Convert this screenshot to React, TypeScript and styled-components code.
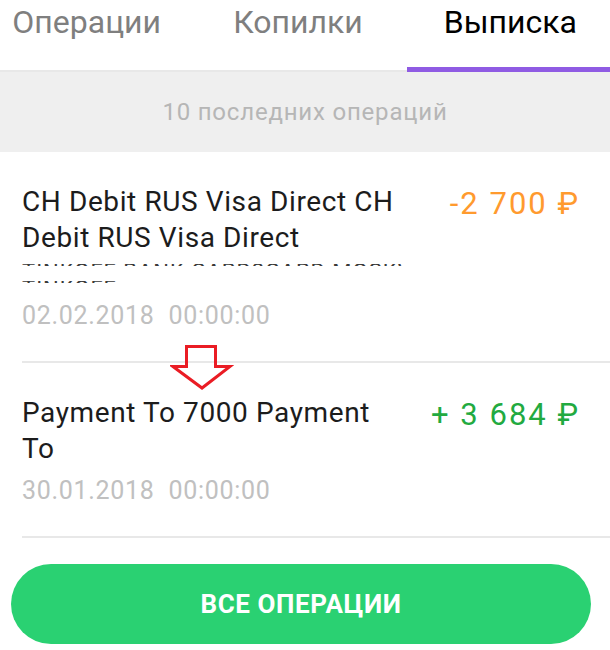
import React, { FC } from 'react';
import styled, { createGlobalStyle } from 'styled-components';

const GlobalStyle = createGlobalStyle`
  html, body {
    margin: 0;
    padding: 0;
    background: #ffffff;
  }

  body {
    font-family: Roboto, 'Liberation Sans', sans-serif;
    -webkit-font-smoothing: antialiased;
  }
`;

const Page = styled.div`
  width: 610px;
  height: 650px;
  overflow: hidden;
  display: flex;
  flex-direction: column;
`;

const Tabs = styled.div`
  display: grid;
  grid-template-columns: repeat(3, 1fr);
`;

const Tab = styled.div<{ $active?: boolean; $shift: number }>`
  box-sizing: border-box;
  height: 72px;
  padding-top: 2px;
  display: flex;
  justify-content: center;
  border-bottom: ${(p) => (p.$active ? '5px solid #8f5be3' : '2px solid #e8e8e8')};
  font-size: 32px;
  line-height: 40px;
  color: ${(p) => (p.$active ? '#000000' : '#7f7f7f')};

  span {
    transform: translateX(${(p) => p.$shift}px);
  }
`;

const Caption = styled.div`
  height: 80px;
  display: flex;
  align-items: center;
  justify-content: center;
  background: #efefef;
  color: #b6b6b6;
  font-size: 24px;
  letter-spacing: 0.8px;
`;

const Item = styled.div`
  position: relative;
  display: flex;
  justify-content: space-between;
  align-items: flex-start;
  margin-left: 22px;
  padding: 32px 30px 30px 0;
  border-bottom: 2px solid #e8e8e8;
`;

const Info = styled.div`
  width: 382px;
`;

const Title = styled.div`
  font-size: 28px;
  line-height: 36px;
  letter-spacing: 0.6px;
  color: #1c1c1c;
`;

const HiddenLine = styled.div`
  height: 36px;
  padding-top: 8px;
  box-sizing: border-box;
`;

const Slice = styled.div<{ $gap: number }>`
  height: 2px;
  margin-top: ${(p) => p.$gap}px;
  overflow: hidden;
  white-space: nowrap;
  font-size: 22px;
  line-height: 22px;
  color: #3a3a3a;

  span {
    display: block;
    margin-top: -3px;
    letter-spacing: 1px;
  }
`;

const Date = styled.div`
  margin-top: 9px;
  font-size: 25px;
  line-height: 30px;
  letter-spacing: 0.7px;
  color: #c0c0c0;
  white-space: pre;
`;

const Amount = styled.div<{ $income?: boolean }>`
  margin-top: 2px;
  font-size: 31px;
  line-height: 36px;
  letter-spacing: 2px;
  white-space: nowrap;
  color: ${(p) => (p.$income ? '#22aa40' : '#ff9a2e')};
`;

const Marker = styled.svg`
  position: absolute;
  left: 148px;
  top: -19px;
`;

const Footer = styled.div`
  padding: 26px 19px 0 11px;
`;

const Button = styled.button`
  width: 100%;
  height: 80px;
  border: none;
  border-radius: 40px;
  background: #2ad172;
  color: #ffffff;
  font-family: Roboto, 'Liberation Sans', sans-serif;
  font-size: 26px;
  font-weight: 700;
  letter-spacing: 0.6px;
`;

const DownArrow: FC = () => (
  <Marker width="64" height="46" viewBox="0 0 64 46">
    <path
      d="M16.5 2.5 H45.5 V22.5 H60 L32 44 L3 22.5 H16.5 Z"
      fill="none"
      stroke="#ea1c24"
      strokeWidth="3"
    />
  </Marker>
);

const tabs = [
  { label: 'Операции', shift: -15 },
  { label: 'Копилки', shift: -7 },
  { label: 'Выписка', shift: 2, active: true },
];

const App: FC = () => (
  <>
    <GlobalStyle />
    <Page>
      <Tabs>
        {tabs.map((t) => (
          <Tab key={t.label} $active={t.active} $shift={t.shift}>
            <span>{t.label}</span>
          </Tab>
        ))}
      </Tabs>
      <Caption>10 последних операций</Caption>
      <Item>
        <Info>
          <Title>CH Debit RUS Visa Direct CH Debit RUS Visa Direct</Title>
          <HiddenLine>
            <Slice $gap={0}>
              <span>TINKOFF BANK CARD2CARD MOSKVA RUS</span>
            </Slice>
            <Slice $gap={15}>
              <span>TINKOFF</span>
            </Slice>
          </HiddenLine>
          <Date>02.02.2018  00:00:00</Date>
        </Info>
        <Amount>-2 700 ₽</Amount>
      </Item>
      <Item>
        <DownArrow />
        <Info>
          <Title>Payment To 7000 Payment To</Title>
          <Date>30.01.2018  00:00:00</Date>
        </Info>
        <Amount $income>+ 3 684 ₽</Amount>
      </Item>
      <Footer>
        <Button>ВСЕ ОПЕРАЦИИ</Button>
      </Footer>
    </Page>
  </>
);

export default App;
